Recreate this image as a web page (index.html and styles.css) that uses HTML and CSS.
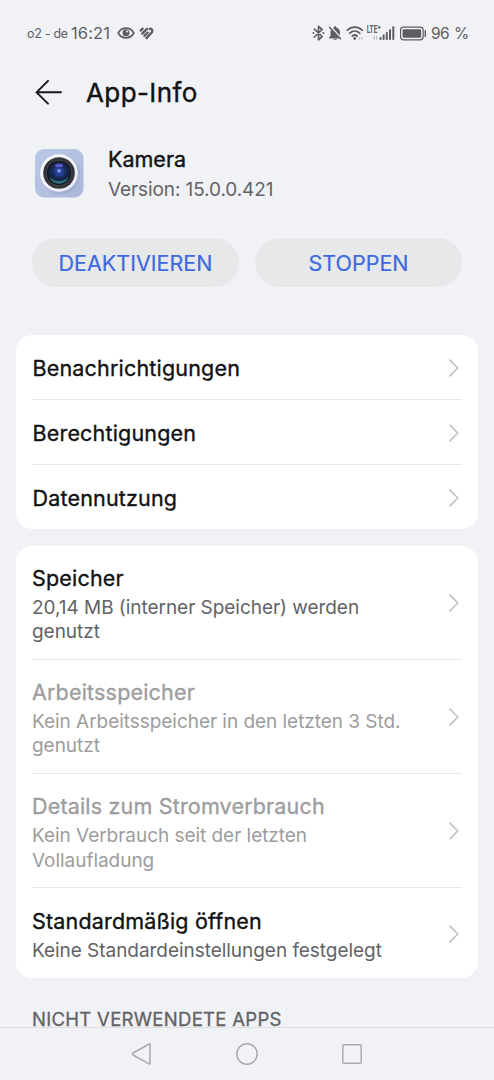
FILE: index.html
```html
<!DOCTYPE html>
<html lang="de">
<head>
<meta charset="utf-8">
<title>App-Info</title>
<link rel="stylesheet" href="styles.css">
</head>
<body>
<svg width="0" height="0" class="defs">
  <symbol id="chev" viewBox="0 0 12 20"><path d="M2 2.2 9.8 10 2 17.8" fill="none" stroke="#c2c2c3" stroke-width="1.7" stroke-linecap="round" stroke-linejoin="round"/></symbol>
</svg>
<div class="screen">
  <header class="status">
    <div class="status-left">
      <span class="carrier">o2 - de</span>
      <span class="clock">16:21</span>
      <svg class="eye" width="18" height="14" viewBox="0 0 18 14"><path d="M1.2 7C4.7.6 13.3.6 16.8 7 13.3 13.4 4.7 13.4 1.2 7Z" fill="none" stroke="#5d5e61" stroke-width="1.7"/><circle cx="9" cy="6.8" r="3.5" fill="#5d5e61"/><circle cx="10.2" cy="5.6" r="1" fill="#f1f2f6"/></svg>
      <svg class="heart" width="15" height="14" viewBox="0 0 15 14" fill="none" stroke="#5d5e61" stroke-width="2.3" stroke-linecap="round"><path d="M1.700 4.600 3.700 2.700"/><path d="M3.200 7.600 8 2.900"/><path d="M5.300 9.800 8.700 6.600"/><path d="M7.500 12.100 12.700 6.500Q14 4.600 12.600 3.200 11.600 2.300 10.700 3"/></svg>
    </div>
    <div class="status-right">
      <svg width="114" height="20" viewBox="312 23 114 20">
        <path d="M314.300 29.200 322.200 36.500 318.500 39.800V26.300L322.200 29.500 314.300 37" fill="none" stroke="#5d5e61" stroke-width="1.700" stroke-linejoin="round" stroke-linecap="round"/>
        <g fill="#5d5e61"><circle cx="313.400" cy="33.100" r="1"/><circle cx="323.400" cy="33.100" r="1"/></g>
        <path d="M335.200 26.300c.8 0 1.100.5 1.100 1.200 2.400.6 3.600 2.500 3.600 5v3.300l1.400 2v.7h-12.200v-.7l1.400-2v-3.300c0-2.500 1.200-4.400 3.600-5 0-.7.3-1.200 1.100-1.200ZM333.500 39.200h3.400c-.3 1.200-3.100 1.200-3.400 0Z" fill="#5d5e61"/>
        <path d="M330 26.500 342 39.200" stroke="#f1f2f6" stroke-width="2.200"/>
        <path d="M329.200 27 341 39.200" stroke="#5d5e61" stroke-width="1.300"/>
        <g fill="none" stroke="#5d5e61" stroke-width="1.800" stroke-linecap="round"><path d="M347.300 30.200C351.500 26 358 26 362.200 30.200"/><path d="M349.800 33.200C352.800 30.300 356.700 30.300 359.700 33.200"/><path d="M352.300 36.100C354 34.600 355.600 34.600 357.200 36.100"/></g>
        <circle cx="354.700" cy="38.500" r="1.400" fill="#5d5e61"/>
        <path d="M359.500 39.500v-2M361.800 37.200v2.300M374.200 36v3.500M376.500 36v3.500" stroke="#b9babd" stroke-width="1.200"/>
        <text class="lte" x="366.800" y="32.800" textLength="10.500" lengthAdjust="spacingAndGlyphs">LTE</text>
        <path d="M377.700 27.300h3M379.200 25.800v3" stroke="#5d5e61" stroke-width="1"/>
        <g fill="#5d5e61"><rect x="379.500" y="37" width="2" height="3" rx=".8"/><rect x="382.600" y="34.500" width="2" height="5.500" rx=".8"/><rect x="385.800" y="32" width="2" height="8" rx=".8"/><rect x="389" y="29.200" width="2" height="10.800" rx=".8"/><rect x="392.300" y="26.300" width="2" height="13.700" rx=".8"/></g>
        <rect x="400.600" y="27.200" width="22.600" height="12.600" rx="3" fill="none" stroke="#5d5e61" stroke-width="1.200"/>
        <rect x="402.600" y="29.200" width="18.600" height="8.600" rx="1.300" fill="#5d5e61"/>
        <rect x="424.600" y="30" width="1.400" height="7" rx=".6" fill="#5d5e61"/>
      </svg>
      <span class="percent">96 %</span>
    </div>
  </header>

  <div class="titlebar">
    <svg width="28" height="26" viewBox="0 0 28 26" fill="none" stroke="#17181a" stroke-width="1.900" stroke-linecap="round" stroke-linejoin="round"><path d="M26 12.300H1.800M13 .9 1.500 12.300 13 23.700"/></svg>
    <h1>App-Info</h1>
  </div>

  <section class="app">
    <svg width="50" height="50" viewBox="0 0 50 50">
      <defs>
        <linearGradient id="tile" x1="0" y1="0" x2="1" y2="1"><stop offset="0" stop-color="#b9c8e8"/><stop offset=".55" stop-color="#b3c0e0"/><stop offset="1" stop-color="#aab6d6"/></linearGradient>
        <linearGradient id="ring" x1="0" y1="0" x2="1" y2="1"><stop offset="0" stop-color="#fff"/><stop offset="1" stop-color="#e3e8f4"/></linearGradient>
        <radialGradient id="lens" cx=".5" cy=".4" r=".6"><stop offset="0" stop-color="#314a9c"/><stop offset=".5" stop-color="#172d5c"/><stop offset="1" stop-color="#101a2c"/></radialGradient>
      </defs>
      <rect x="1" y="1" width="48.500" height="48.500" rx="9" fill="url(#tile)"/>
      <circle cx="27" cy="27" r="19.500" fill="#91a0c6" opacity=".4"/>
      <circle cx="25" cy="25" r="18.800" fill="url(#ring)"/>
      <circle cx="25" cy="25" r="15.800" fill="#34353a"/>
      <circle cx="25" cy="25" r="12.800" fill="#16171d" stroke="#4b4e57" stroke-width=".8"/>
      <circle cx="25" cy="25.200" r="11" fill="url(#lens)"/>
      <path d="M15.500 28.500Q17 35.500 25 35.800 33 35.500 34.500 28.500 31 33 25 33 19 33 15.500 28.500Z" fill="#2c7078"/>
      <ellipse cx="25" cy="17.600" rx="4" ry="1.900" fill="#5f58c8"/>
      <circle cx="25" cy="23.800" r="4.800" fill="#253f94"/>
      <circle cx="25" cy="22.800" r="1.900" fill="#7f96ee"/>
    </svg>
    <div class="app-text"><div class="app-name">Kamera</div><div class="app-version">Version: 15.0.0.421</div></div>
  </section>

  <div class="actions"><button>DEAKTIVIEREN</button><button>STOPPEN</button></div>

  <main>
    <ul class="card short">
      <li class="row"><div class="title">Benachrichtigungen</div><svg class="chev"><use href="#chev"/></svg></li>
      <li class="row"><div class="title">Berechtigungen</div><svg class="chev"><use href="#chev"/></svg></li>
      <li class="row"><div class="title">Datennutzung</div><svg class="chev"><use href="#chev"/></svg></li>
    </ul>
    <ul class="card detail">
      <li class="row"><div><div class="title">Speicher</div><div class="sub">20,14 MB (interner Speicher) werden<br>genutzt</div></div><svg class="chev"><use href="#chev"/></svg></li>
      <li class="row off"><div><div class="title">Arbeitsspeicher</div><div class="sub">Kein Arbeitsspeicher in den letzten 3 Std.<br>genutzt</div></div><svg class="chev"><use href="#chev"/></svg></li>
      <li class="row off"><div><div class="title">Details zum Stromverbrauch</div><div class="sub">Kein Verbrauch seit der letzten<br>Vollaufladung</div></div><svg class="chev"><use href="#chev"/></svg></li>
      <li class="row"><div><div class="title">Standardmäßig öffnen</div><div class="sub">Keine Standardeinstellungen festgelegt</div></div><svg class="chev"><use href="#chev"/></svg></li>
    </ul>
    <h2>NICHT VERWENDETE APPS</h2>
  </main>

  <nav>
    <svg width="22" height="24" viewBox="0 0 22 24"><path d="M19 2.500V21.500Q19 22.300 18.200 21.800L2 13Q.7 12 2 11L18.200 2Q19 1.700 19 2.500Z"/></svg>
    <svg width="24" height="24" viewBox="0 0 24 24"><circle cx="12" cy="12" r="10.200"/></svg>
    <svg width="22" height="24" viewBox="0 0 22 24"><rect x="1.800" y="2.800" width="18.400" height="18.400" rx="1"/></svg>
  </nav>
</div>
</body>
</html>
```
FILE: styles.css
```css
* { box-sizing: border-box; }
body { margin: 0; background: #f1f2f6; font-family: Inter, "Noto Sans", sans-serif; color: #111214; }
svg { display: block; flex: none; }
.defs { position: absolute; }
.screen { width: 494px; height: 1080px; display: flex; flex-direction: column; overflow: hidden; }

.status { height: 66px; flex: none; display: flex; justify-content: space-between; align-items: center; padding: 0 27px; color: #5d5e61; white-space: nowrap; }
.status-left, .status-right { display: flex; align-items: center; }
.carrier { font-size: 12.5px; letter-spacing: -.3px; width: 44px; }
.clock { font-size: 16.5px; letter-spacing: .1px; width: 46px; }
.heart { margin-left: 4px; }
.percent { font-size: 15.5px; margin-left: 5px; width: 36px; letter-spacing: -.5px; word-spacing: 1px; }
.lte { font: 700 10px Roboto, sans-serif; fill: #5d5e61; }

.titlebar { height: 54px; flex: none; display: flex; align-items: center; gap: 23px; padding-left: 35px; }
h1 { margin: 0; font-size: 26px; font-weight: 400; letter-spacing: .4px; line-height: 32px; -webkit-text-stroke: .4px currentColor; }

.app { height: 118px; flex: none; display: flex; align-items: flex-start; gap: 24px; padding: 28px 0 0 34px; }
.app-name { font-size: 21.5px; font-weight: 400; line-height: 26px; margin-top: -2px; -webkit-text-stroke: .4px currentColor; }
.app-version { font-size: 19px; line-height: 24px; color: #626366; margin-top: 6px; letter-spacing: -.1px; }

.actions { height: 97px; flex: none; display: flex; gap: 16px; padding: 0 32px; }
button { flex: 1; height: 49px; padding: 0; border: 0; border-radius: 25px; background: #e6e8e9; color: #3e69df; font: 400 21.5px Inter, sans-serif; -webkit-text-stroke: .2px currentColor; }

.card { list-style: none; margin: 0 16px 16.5px; padding: 0 16px; background: #fff; border-radius: 16px; }
.row { display: flex; align-items: center; justify-content: space-between; border-bottom: 1px solid #e7e7e8; }
.row:last-child { border-bottom: 0; }
.short .row { height: 65px; padding-top: 1px; }
.short .row:last-child { height: 64px; }
.detail { margin-bottom: 0; }
.detail .row { height: 114.3px; padding-top: 1px; }
.detail .row:last-child { height: 90px; }
.title { font-size: 21.5px; font-weight: 400; line-height: 28px; letter-spacing: .18px; white-space: nowrap; -webkit-text-stroke: .35px currentColor; }
.short .title { padding-left: .5px; }
.detail .title { margin-top: 3px; }
.sub { font-size: 19px; line-height: 24.5px; color: #626366; margin-top: 4px; letter-spacing: -.04px; white-space: nowrap; }
.off .title, .off .sub { color: #9d9d9e; }
.chev { width: 12px; height: 20px; margin-right: 2px; }
h2 { margin: 29px 32px 0; font-size: 18.5px; font-weight: 400; line-height: 24px; letter-spacing: .3px; color: #626366; -webkit-text-stroke: .3px currentColor; }
main { height: 692px; flex: none; }

nav { flex: 1; display: flex; justify-content: center; gap: 82px; padding-top: 14px; border-top: 1px solid #dddfe3; background: #f1f2f6; position: relative; }
nav path, nav circle, nav rect { fill: none; stroke: #a9aaad; stroke-width: 1.5; }
```
